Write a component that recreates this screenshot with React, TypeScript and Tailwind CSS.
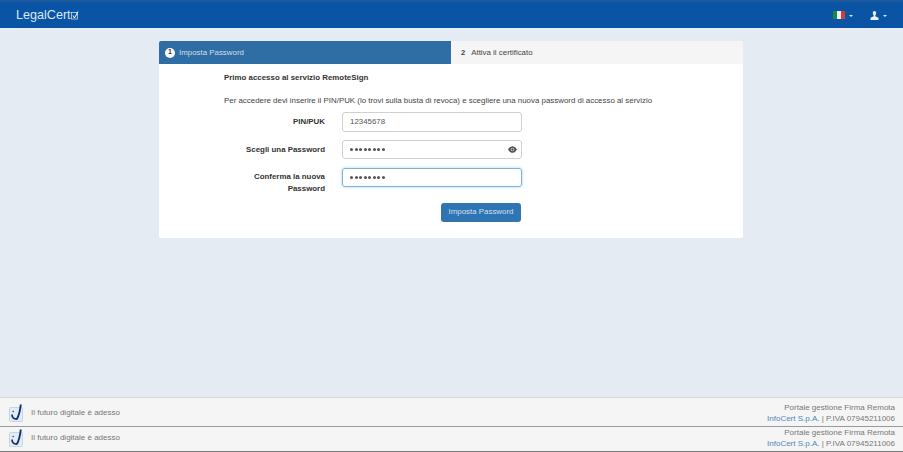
import React from 'react';

const Caret = () => <span className="ml-[4px] mt-[1px] inline-block h-0 w-0 border-x-[2.5px] border-t-[2.5px] border-x-transparent border-t-[#dce8f3]" />;

// check logo of the footer
const FooterLogo = () => (
  <svg width="15" height="18" viewBox="0 0 15 18" className="shrink-0">
    <rect x="0.5" y="3.5" width="13" height="14" rx="1" fill="#e3ecf5" stroke="#c3d5e6" />
    <circle cx="4.200" cy="7.500" r="0.800" fill="#2a4a80" />
    <path d="M3 10.500c0 3.500 2.200 4.800 5 4.500" fill="none" stroke="#12306b" strokeWidth="1.700" />
    <path d="M7.800 15.200C10 11.500 11.200 6 11.800 0.500" fill="none" stroke="#12306b" strokeWidth="1.900" />
  </svg>
);

const Footer = ({ rowClass }: { rowClass: string }) => (
  <div className={`flex shrink-0 items-center justify-between bg-[#f5f5f5] pl-[9px] pr-[8px] text-[8px] text-[#777] ${rowClass}`}>
    <div className="flex items-center gap-[7px]">
      <FooterLogo />
      <span>Il futuro digitale è adesso</span>
    </div>
    <div className="text-right leading-[11px]">
      <div>Portale gestione Firma Remota</div>
      <div>
        <span className="text-[#4f86b8]">InfoCert S.p.A.</span> | P.IVA 07945211006
      </div>
    </div>
  </div>
);

const Dots = () => (
  <span className="flex gap-[1.500px]">
    {[0, 1, 2, 3, 4, 5, 6, 7].map((i) => (
      <span key={i} className="h-[3px] w-[3px] rounded-full bg-[#555]" />
    ))}
  </span>
);

export default function App() {
  return (
    <div className="flex h-[452px] w-[903px] flex-col overflow-hidden bg-[#e4ebf2] font-['Liberation_Sans',Arial,sans-serif] text-[7.900px] text-[#333]">
      <header className="flex h-[28px] shrink-0 items-center justify-between border-t-2 border-[#1f5a9e] bg-[#0a54a6] pl-[16px] pr-[16px]">
        <div className="flex items-center text-[12.600px] font-normal text-[#dbe7f3]">
          LegalCert
          <svg width="9" height="9" viewBox="0 0 9 9" className="ml-[0.500px] mt-[2px]">
            <rect x="0.500" y="1.500" width="6" height="6.500" fill="none" stroke="#c6d8ea" strokeWidth="0.800" />
            <path d="M2 4.500l1.500 2.500L7 0.500" fill="none" stroke="#fff" strokeWidth="1" />
          </svg>
        </div>
        <div className="flex items-center gap-[17px]">
          <div className="flex items-center">
            <span className="flex h-[8px] w-[12px]">
              <span className="flex-1 bg-[#1c8a46]" />
              <span className="flex-1 bg-[#f3f3f3]" />
              <span className="flex-1 bg-[#d93a3a]" />
            </span>
            <Caret />
          </div>
          <div className="flex items-center">
            <svg width="9" height="9" viewBox="0 0 9 9">
              <path d="M4.500 0C3.200 0 2.700 1 2.800 2.300c.1 1 .5 1.800.9 2.200v.8L.5 6.800V9h8V6.800L5.300 5.300v-.8c.4-.4.800-1.200.9-2.200C6.300 1 5.800 0 4.500 0z" fill="#e8f0f8" />
            </svg>
            <Caret />
          </div>
        </div>
      </header>

      <main className="flex-1 pt-[13px]">
        <div className="ml-[159px] w-[584px] overflow-hidden rounded-[2px] bg-white">
          <div className="flex h-[23px]">
            <div className="flex w-[292px] items-center gap-[4px] bg-[#2f6da5] pl-[6px] text-[#cfdfee]">
              <span className="flex h-[10px] w-[10px] items-center justify-center rounded-full bg-white text-[7px] font-bold text-[#333]">1</span>
              Imposta Password
            </div>
            <div className="flex flex-1 items-center gap-[6px] bg-[#f5f5f5] pl-[10px] text-[#444]">
              <span className="text-[7.500px] font-bold">2</span>
              Attiva il certificato
            </div>
          </div>

          <div className="h-[174px] pl-[65px] pt-[9px]">
            <p className="font-bold leading-[10px]">Primo accesso al servizio RemoteSign</p>
            <p className="mt-[12px] leading-[12px] text-[#444]">
              Per accedere devi inserire il PIN/PUK (lo trovi sulla busta di revoca) e scegliere una nuova password di accesso al servizio
            </p>

            <div className="mt-[5px] flex flex-col gap-[8.250px]">
              <div className="flex items-center">
                <label className="w-[101px] text-right font-bold">PIN/PUK</label>
                <div className="ml-[17px] flex h-[19.500px] w-[180px] items-center rounded-[3px] border border-[#d0d0d0] pl-[7px] text-[#555]">12345678</div>
              </div>
              <div className="flex items-center">
                <label className="w-[101px] text-right font-bold">Scegli una Password</label>
                <div className="ml-[17px] flex h-[19.500px] w-[180px] items-center justify-between rounded-[3px] border border-[#d0d0d0] pl-[7px] pr-[4px]">
                  <Dots />
                  <svg width="9" height="7" viewBox="0 0 9 7">
                    <path d="M0 3.500C1.500 1 3 .2 4.500 .2S7.500 1 9 3.500C7.500 6 6 6.800 4.500 6.800S1.500 6 0 3.500z" fill="#555" />
                    <circle cx="4.500" cy="3.500" r="1.800" fill="#ccc" />
                    <circle cx="4.500" cy="3.500" r="1" fill="#444" />
                  </svg>
                </div>
              </div>
              <div className="flex h-[19.500px] items-start">
                <label className="w-[101px] pt-[3px] text-right font-bold leading-[12px]">
                  Conferma la nuova Password
                </label>
                <div className="ml-[17px] flex h-[19.500px] w-[180px] items-center rounded-[3px] border border-[#7fb0d8] pl-[7px] shadow-[0_0_3px_rgba(102,175,233,0.6)]">
                  <Dots />
                </div>
              </div>
            </div>

            <div className="mt-[15.500px] flex w-[297px] justify-end">
              <button className="h-[19.500px] w-[80px] rounded-[3px] bg-[#2f74b3] text-[7.900px] text-[#cfe0ef]">Imposta Password</button>
            </div>
          </div>
        </div>
      </main>

      <Footer rowClass="h-[29px] border-t border-[#d6dadd] pt-[2px]" />
      <Footer rowClass="h-[25px] border-t border-[#999] pb-[2px]" />
      <div className="h-px shrink-0 bg-[#777]" />
    </div>
  );
}
